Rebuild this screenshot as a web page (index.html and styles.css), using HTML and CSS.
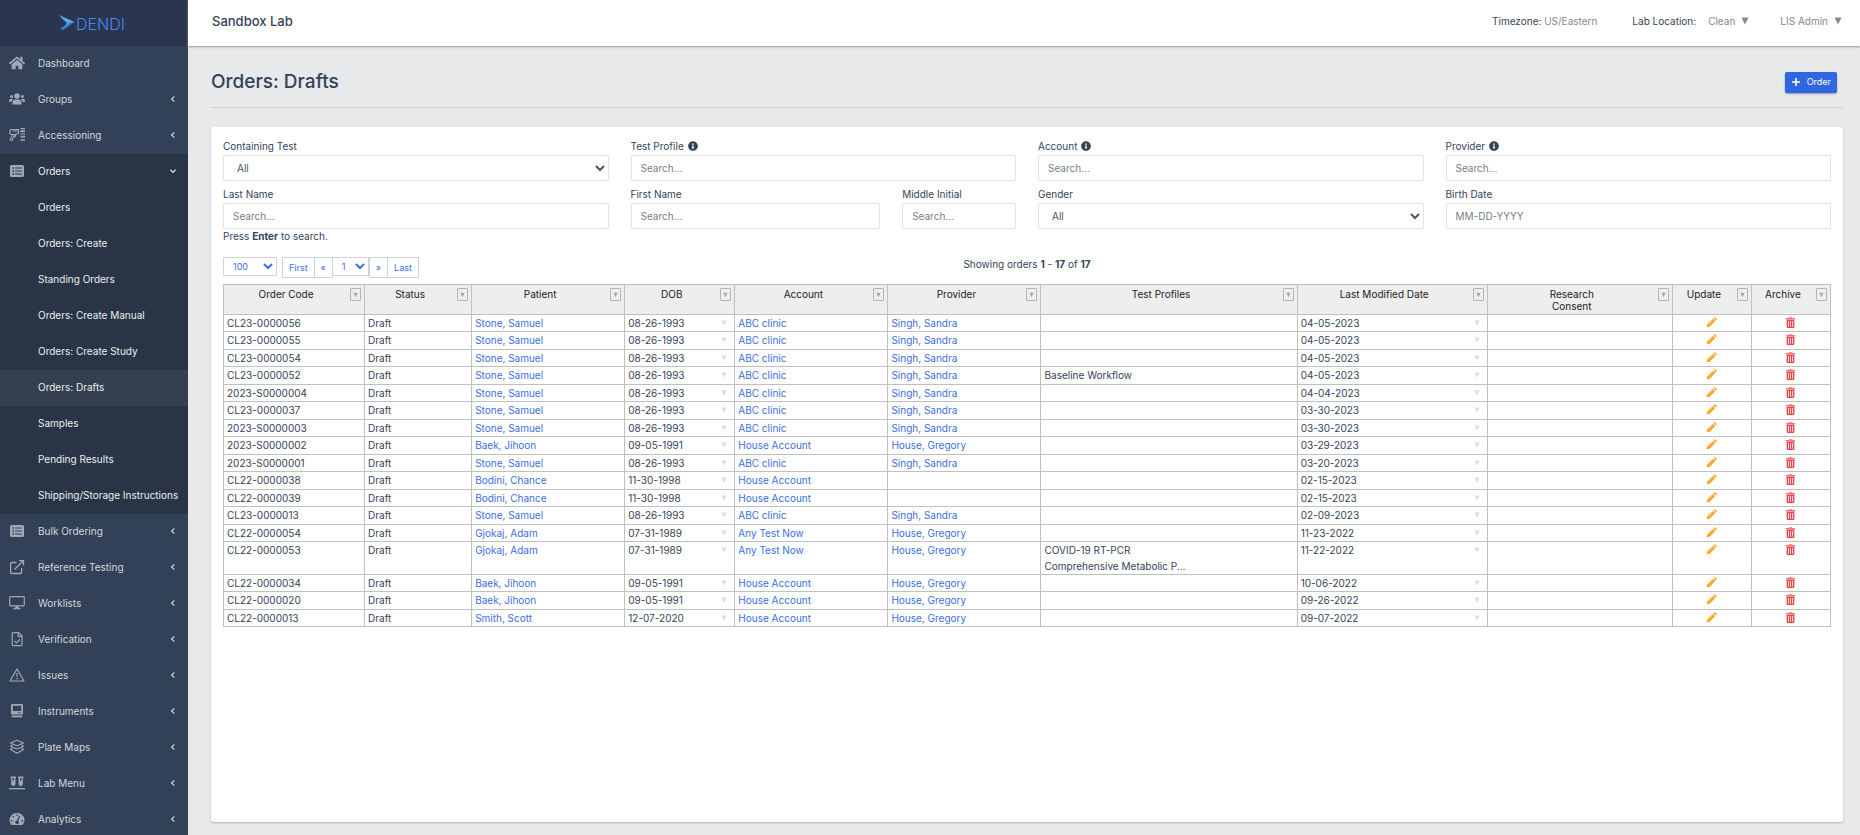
FILE: index.html
```html
<!DOCTYPE html>
<html lang="en">
<head>
  <meta charset="UTF-8">
  <title>Orders: Drafts</title>
  <link rel="stylesheet" href="styles.css">
</head>
<body>
  <svg class="sprite" aria-hidden="true">
    <symbol id="i-home" viewBox="0 0 576 512"><path d="M280.37 148.26L96 300.11V464a16 16 0 0 0 16 16l112.06-.29a16 16 0 0 0 15.92-16V368a16 16 0 0 1 16-16h64a16 16 0 0 1 16 16v95.64a16 16 0 0 0 16 16.05L464 480a16 16 0 0 0 16-16V300L295.67 148.26a12.19 12.19 0 0 0-15.3 0zM571.6 251.47L488 182.56V44.05a12 12 0 0 0-12-12h-56a12 12 0 0 0-12 12v72.61L318.47 43a48 48 0 0 0-61 0L4.34 251.47a12 12 0 0 0-1.6 16.9l25.5 31A12 12 0 0 0 45.15 301l235.22-193.74a12.19 12.19 0 0 1 15.3 0L530.9 301a12 12 0 0 0 16.9-1.6l25.5-31a12 12 0 0 0-1.7-16.93z"/></symbol>
    <symbol id="i-users" viewBox="0 0 16 16"><circle cx="8" cy="5" r="2.8"/><circle cx="2.5" cy="5.6" r="1.5"/><circle cx="13.5" cy="5.6" r="1.5"/><path d="M3.4 13.5v-1.6c0-2 1.5-3.3 3.1-3.3h3c1.6 0 3.1 1.3 3.1 3.3v1.6zM0 10.700V9.600C0 8.600.8 7.900 1.700 7.900h1.700c.5 0 .8.1 1.100.4-1.100.6-1.700 1.500-1.900 2.400zM16 10.700V9.600c0-1-.8-1.700-1.700-1.700h-1.700c-.5 0-.8.1-1.100.4 1.100.6 1.700 1.500 1.900 2.400z"/></symbol>
    <symbol id="i-scan" viewBox="0 0 16 16"><path d="M1.500 2.500h8v4l-4 1h-3.500l-1.500-1.500zM3.500 7.500l-2.500 5 2 1 2.600-6M7 7.300l-1 2.700h-1.200M9.500 4h-6" fill="none" stroke="currentColor" stroke-width="1.100"/><path d="M11.500 1h4.500v1.300h-4.500zM11.500 3.300h4.500v2h-4.500zM11.500 6.500h4.500v1h-4.500zM11.500 8.700h4.500v1.800h-4.500zM11.500 12.300h4.500v1.500h-4.500z"/></symbol>
    <symbol id="i-list" viewBox="0 0 16 16"><path fill-rule="evenodd" d="M2.500 2h11A1.500 1.500 0 0 1 15 3.500v9a1.500 1.500 0 0 1-1.500 1.500h-11A1.500 1.500 0 0 1 1 12.500v-9A1.500 1.500 0 0 1 2.500 2zM3.500 4.200v1.600h1.600V4.200zM6.200 4.500v1h6.600v-1zM3.500 7.200v1.600h1.600V7.200zM6.200 7.500v1h6.600v-1zM3.500 10.200v1.600h1.600v-1.600zM6.200 10.500v1h6.600v-1z"/></symbol>
    <symbol id="i-external" viewBox="0 0 16 16"><path d="M7.500 3.500H2.600a1 1 0 0 0-1 1v9a1 1 0 0 0 1 1h9a1 1 0 0 0 1-1V9M5.500 10.500l8.500-8.500M10 1.600h4.500v4.600" fill="none" stroke="currentColor" stroke-width="1.300"/></symbol>
    <symbol id="i-desktop" viewBox="0 0 16 16"><path d="M1.500 1.700h13a.8.8 0 0 1 .8.8v7.500a.8.8 0 0 1-.8.8h-13a.8.8 0 0 1-.8-.8V2.500a.8.8 0 0 1 .8-.8z" fill="none" stroke="currentColor" stroke-width="1.200"/><path d="M6.700 11h2.600l.5 2h1.700v1.200h-7V13h1.700z"/></symbol>
    <symbol id="i-file" viewBox="0 0 16 16"><path d="M4 1.600h5.500l3.500 3.500v8.700a.8.8 0 0 1-.8.8H4a.8.8 0 0 1-.8-.8V2.400a.8.8 0 0 1 .8-.8zM9.300 1.800v3.500h3.500M5.500 9.800l2 2 3.500-3.500" fill="none" stroke="currentColor" stroke-width="1.200"/></symbol>
    <symbol id="i-warning" viewBox="0 0 16 16"><path d="M8 2L15 14H1z" fill="none" stroke="currentColor" stroke-width="1.200" stroke-linejoin="round"/><path d="M7.300 6h1.400l-.2 4h-1zM7.300 11h1.400v1.300H7.300z"/></symbol>
    <symbol id="i-instrument" viewBox="0 0 16 16"><path fill-rule="evenodd" d="M3 1h10a1 1 0 0 1 1 1v9.500H2V2a1 1 0 0 1 1-1zM3.800 2.700v5.300h8.400V2.700zM8.500 9.400v.8h3.500v-.8z"/><path d="M2.800 12.500h10.400v1.800H2.800z"/></symbol>
    <symbol id="i-layers" viewBox="0 0 16 16"><path d="M8 1.300l6.500 2.700L8 6.700 1.500 4zM3.700 6L1.500 7.200 8 10l6.500-2.800L12.300 6M3.700 9.200l-2.200 1.200L8 14.200l6.500-3.800-2.200-1.200" fill="none" stroke="currentColor" stroke-width="1.200" stroke-linejoin="round"/></symbol>
    <symbol id="i-vials" viewBox="0 0 16 16"><path fill-rule="evenodd" d="M1.500 1.500h5.500v1.500h-.6v6a2 2 0 0 1-4.200 0V3h-.7zM3.500 3v2.500H5V3zM9 1.500h5.500v1.500h-.7v6a2 2 0 0 1-4.200 0V3H9zM11 3v2.500h1.500V3z"/><path d="M0 13h16v1.300H0z"/></symbol>
    <symbol id="i-gauge" viewBox="0 0 16 16"><path fill-rule="evenodd" d="M8 2a7.200 7.200 0 0 1 6 11.500.9.9 0 0 1-.7.400H2.700a.9.900 0 0 1-.7-.4A7.200 7.200 0 0 1 8 2zM7.300 3.200v1.500h1.400V3.200zM3.600 4.900v1.400h1.400V4.900zM2 9v1.400h1.400V9zM12.600 9v1.400H14V9zM10.200 4.400L8 9.400a1.800 1.800 0 1 0 1.300.5l2-5z"/></symbol>
    <symbol id="i-left" viewBox="0 0 8 8"><path d="M5.300 1.300L2.600 4l2.700 2.700" fill="none" stroke="currentColor" stroke-width="1.200"/></symbol>
    <symbol id="i-down" viewBox="0 0 8 8"><path d="M1.300 2.700L4 5.400l2.700-2.700" fill="none" stroke="currentColor" stroke-width="1.200"/></symbol>
    <symbol id="i-info" viewBox="0 0 512 512"><path d="M256 8C119.043 8 8 119.083 8 256c0 136.997 111.043 248 248 248s248-111.003 248-248C504 119.083 392.957 8 256 8zm0 110c23.196 0 42 18.804 42 42s-18.804 42-42 42-42-18.804-42-42 18.804-42 42-42zm56 254c0 6.627-5.373 12-12 12h-88c-6.627 0-12-5.373-12-12v-24c0-6.627 5.373-12 12-12h12v-64h-12c-6.627 0-12-5.373-12-12v-24c0-6.627 5.373-12 12-12h64c6.627 0 12 5.373 12 12v100h12c6.627 0 12 5.373 12 12v24z"/></symbol>
    <symbol id="i-plus" viewBox="0 0 10 10"><path d="M4.200 1h1.600v3.200H9v1.600H5.800V9H4.200V5.800H1V4.200h3.200z"/></symbol>
    <symbol id="i-caret" viewBox="0 0 8 8"><path d="M.5 .5h7L4 7.500z"/></symbol>
    <symbol id="i-pencil" viewBox="0 0 12 12"><path d="M.7 11.300l.8-3.300L7.700 1.800l2.500 2.500L4 10.500z"/><path d="M8.300 1.200l.7-.7a.9.9 0 0 1 1.200 0l1.300 1.300a.9.9 0 0 1 0 1.200l-.7.7z"/><path d="M3 8.300L7.800 3.500" stroke="#fff" stroke-opacity=".6" stroke-width=".6"/></symbol>
    <symbol id="i-trash" viewBox="0 0 10 12"><path opacity=".75" d="M3.500.3h3l.6.9H10v1.500H0V1.200h2.900z"/><path fill-rule="evenodd" d="M.8 3h8.400v8a.9.9 0 0 1-.9.900H1.700a.9.9 0 0 1-.9-.9zM2.300 4.300v6.200h.9V4.300zM4.600 4.300v6.200h.9V4.300zM6.900 4.300v6.200h.9V4.300z"/></symbol>
  </svg>

  <div class="layout">
    <aside class="sidebar">
      <a href="#" class="brand">
        <svg class="brand-mark" viewBox="0 0 16 16">
          <path d="M0 0l15.500 7L10 8.500 4 4.500z" fill="#5aa9f5"/>
          <path d="M15.500 7L3 15.500 2 11l1.500 1.500L10 7.500z" fill="#3f7fe0"/>
          <path d="M4 4.500l6 3.500-4 3 2-3z" fill="#35d0d8"/>
        </svg>
        <span class="brand-name">DENDI</span>
      </a>
      <nav>
        <a href="#" class="nav-item"><svg class="nav-icon"><use href="#i-home"/></svg>Dashboard</a>
        <a href="#" class="nav-item"><svg class="nav-icon"><use href="#i-users"/></svg>Groups<svg class="chevron"><use href="#i-left"/></svg></a>
        <a href="#" class="nav-item"><svg class="nav-icon"><use href="#i-scan"/></svg>Accessioning<svg class="chevron"><use href="#i-left"/></svg></a>
        <div class="nav-open">
          <a href="#" class="nav-item"><svg class="nav-icon"><use href="#i-list"/></svg>Orders<svg class="chevron"><use href="#i-down"/></svg></a>
          <a href="#" class="nav-sub">Orders</a>
          <a href="#" class="nav-sub">Orders: Create</a>
          <a href="#" class="nav-sub">Standing Orders</a>
          <a href="#" class="nav-sub">Orders: Create Manual</a>
          <a href="#" class="nav-sub">Orders: Create Study</a>
          <a href="#" class="nav-sub active">Orders: Drafts</a>
          <a href="#" class="nav-sub">Samples</a>
          <a href="#" class="nav-sub">Pending Results</a>
          <a href="#" class="nav-sub">Shipping/Storage Instructions</a>
        </div>
        <a href="#" class="nav-item"><svg class="nav-icon"><use href="#i-list"/></svg>Bulk Ordering<svg class="chevron"><use href="#i-left"/></svg></a>
        <a href="#" class="nav-item"><svg class="nav-icon"><use href="#i-external"/></svg>Reference Testing<svg class="chevron"><use href="#i-left"/></svg></a>
        <a href="#" class="nav-item"><svg class="nav-icon"><use href="#i-desktop"/></svg>Worklists<svg class="chevron"><use href="#i-left"/></svg></a>
        <a href="#" class="nav-item"><svg class="nav-icon"><use href="#i-file"/></svg>Verification<svg class="chevron"><use href="#i-left"/></svg></a>
        <a href="#" class="nav-item"><svg class="nav-icon"><use href="#i-warning"/></svg>Issues<svg class="chevron"><use href="#i-left"/></svg></a>
        <a href="#" class="nav-item"><svg class="nav-icon"><use href="#i-instrument"/></svg>Instruments<svg class="chevron"><use href="#i-left"/></svg></a>
        <a href="#" class="nav-item"><svg class="nav-icon"><use href="#i-layers"/></svg>Plate Maps<svg class="chevron"><use href="#i-left"/></svg></a>
        <a href="#" class="nav-item"><svg class="nav-icon"><use href="#i-vials"/></svg>Lab Menu<svg class="chevron"><use href="#i-left"/></svg></a>
        <a href="#" class="nav-item"><svg class="nav-icon"><use href="#i-gauge"/></svg>Analytics<svg class="chevron"><use href="#i-left"/></svg></a>
      </nav>
    </aside>

    <div class="page">
      <header class="topbar">
        <span class="lab-name">Sandbox Lab</span>
        <div class="topbar-right">
          <span class="timezone">Timezone: <span class="muted">US/Eastern</span></span>
          <div class="location">
            <span>Lab Location:</span>
            <a href="#" class="menu-link">Clean <svg class="menu-caret"><use href="#i-caret"/></svg></a>
          </div>
          <a href="#" class="menu-link">LIS Admin <svg class="menu-caret"><use href="#i-caret"/></svg></a>
        </div>
      </header>

      <main class="content">
        <div class="page-head">
          <h1>Orders: Drafts</h1>
          <button type="button" class="btn-primary"><svg class="plus"><use href="#i-plus"/></svg>Order</button>
        </div>

        <section class="card">
          <form class="filters">
            <div class="field span-3">
              <label for="test">Containing Test</label>
              <select id="test"><option>All</option></select>
            </div>
            <div class="field span-3">
              <label for="profile">Test Profile <svg class="info"><use href="#i-info"/></svg></label>
              <input id="profile" type="text" placeholder="Search...">
            </div>
            <div class="field span-3">
              <label for="account">Account <svg class="info"><use href="#i-info"/></svg></label>
              <input id="account" type="text" placeholder="Search...">
            </div>
            <div class="field span-3">
              <label for="provider">Provider <svg class="info"><use href="#i-info"/></svg></label>
              <input id="provider" type="text" placeholder="Search...">
            </div>
            <div class="field span-3">
              <label for="last">Last Name</label>
              <input id="last" type="text" placeholder="Search...">
            </div>
            <div class="field span-2">
              <label for="first">First Name</label>
              <input id="first" type="text" placeholder="Search...">
            </div>
            <div class="field span-1">
              <label for="middle">Middle Initial</label>
              <input id="middle" type="text" placeholder="Search...">
            </div>
            <div class="field span-3">
              <label for="gender">Gender</label>
              <select id="gender"><option>All</option></select>
            </div>
            <div class="field span-3">
              <label for="birth">Birth Date</label>
              <input id="birth" type="text" placeholder="MM-DD-YYYY">
            </div>
          </form>
          <p class="hint">Press <strong>Enter</strong> to search.</p>

          <div class="toolbar">
            <div class="pager">
              <select class="page-size" aria-label="Rows per page"><option>100</option></select>
              <div class="pages">
                <button type="button">First</button>
                <button type="button">«</button>
                <select aria-label="Page"><option>1</option></select>
                <button type="button">»</button>
                <button type="button">Last</button>
              </div>
            </div>
            <p class="summary">Showing orders <strong>1</strong> - <strong>17</strong> of <strong>17</strong></p>
          </div>

          <table class="orders">
            <colgroup>
              <col class="c-code"><col class="c-status"><col class="c-name"><col class="c-dob"><col class="c-name"><col class="c-name">
              <col class="c-profiles"><col class="c-modified"><col class="c-consent"><col class="c-action"><col class="c-action">
            </colgroup>
            <thead>
              <tr id="head"></tr>
            </thead>
            <tbody id="rows"></tbody>
          </table>
        </section>
      </main>
    </div>
  </div>

  <script src="script.js"></script>
</body>
</html>
```
FILE: styles.css
```css
:root {
  --sidebar: #324158;
  --sidebar-top: #29364d;
  --sidebar-open: #293546;
  --sidebar-active: #343f4f;
  --bg: #e7e9eb;
  --text: #34435a;
  --muted: #85868f;
  --link: #3b6fe0;
  --primary: #3067e0;
  --border: #dfe2e6;
  --grid: #c0c0c0;
}
* {
  box-sizing: border-box;
}
body {
  margin: 0;
  font-family: Inter, "Liberation Sans", sans-serif;
  font-size: 10px;
  line-height: 16px;
  color: var(--text);
  background: var(--bg);
}
a {
  text-decoration: none;
  color: var(--link);
}
svg {
  fill: currentColor;
}
.sprite {
  display: none;
}
.layout {
  display: flex;
  height: 100vh;
}

/* Sidebar */
.sidebar {
  flex: 0 0 188px;
  background: var(--sidebar);
  overflow: hidden;
}
.brand {
  display: flex;
  align-items: center;
  justify-content: center;
  gap: 1px;
  height: 46px;
  padding-right: 4px;
  background: var(--sidebar-top);
  color: #4f86ee;
}
.brand-mark {
  width: 16px;
  height: 16px;
}
.brand-name {
  padding-top: 2px;
  font-size: 16px;
  font-weight: 300;
}
.nav-item,
.nav-sub {
  display: flex;
  align-items: center;
  height: 36px;
  padding: 0 11px 2px 9px;
  color: #d3d7dc;
}
.nav-sub {
  padding-left: 38px;
  padding-right: 0;
  color: #eceef0;
  white-space: nowrap;
}
.nav-icon {
  width: 16px;
  height: 16px;
  margin-right: 13px;
  color: #a0a8b3;
}
.chevron {
  width: 8px;
  height: 8px;
  margin-left: auto;
}
.nav-open {
  background: var(--sidebar-open);
}
.nav-open .nav-item {
  color: #eceef0;
}
.nav-sub.active {
  background: var(--sidebar-active);
}

/* Top bar */
.page {
  flex: 1;
  min-width: 0;
  display: flex;
  flex-direction: column;
}
.topbar {
  display: flex;
  align-items: center;
  justify-content: space-between;
  height: 46px;
  padding: 0 18px 4px 24px;
  background: #fff;
  box-shadow: 0 1px 2px #8e97ab;
}
.lab-name {
  font-size: 13px;
  font-weight: 500;
}
.topbar-right {
  display: flex;
  gap: 31px;
}
.timezone {
  padding-right: 4px;
}
.location {
  display: flex;
  gap: 12px;
}
.muted,
.menu-link {
  color: var(--muted);
}
.menu-link {
  display: flex;
  align-items: center;
  gap: 6px;
}
.menu-caret {
  width: 8px;
  height: 8px;
}

/* Content */
.content {
  flex: 1;
  min-height: 0;
  display: flex;
  flex-direction: column;
  padding: 14px 17px 13px 23px;
}
.page-head {
  display: flex;
  align-items: center;
  justify-content: space-between;
  height: 48px;
  padding: 0 6px 3px 0;
  border-bottom: 1px solid #cfd2d6;
  margin-bottom: 19px;
}
h1 {
  margin: 0;
  font-size: 19px;
  font-weight: 500;
}
.btn-primary {
  display: flex;
  align-items: center;
  gap: 6px;
  height: 21px;
  padding: 0 6px;
  border: 0;
  border-radius: 2px;
  background: var(--primary);
  box-shadow: 0 1px 2px #8e97ab;
  color: #fff;
  font: inherit;
  font-size: 9px;
}
.plus {
  width: 10px;
  height: 10px;
}
.card {
  flex: 1;
  padding: 11px 12px;
  background: #fff;
  border-radius: 3px;
  box-shadow: 0 1px 2px #a9b1c0;
}

/* Filters */
.filters {
  display: grid;
  grid-template-columns: repeat(12, 1fr);
  column-gap: 22px;
  row-gap: 5px;
}
.span-1 { grid-column: span 1; }
.span-2 { grid-column: span 2; }
.span-3 { grid-column: span 3; }
.field {
  display: flex;
  flex-direction: column;
  min-width: 0;
}
.field label {
  display: flex;
  align-items: center;
  gap: 4px;
  height: 17px;
  padding-bottom: 2px;
  white-space: nowrap;
}
.info {
  width: 10px;
  height: 10px;
}
.field input,
.field select {
  width: 100%;
  height: 26px;
  padding: 0 9px;
  border: 1px solid var(--border);
  border-radius: 2px;
  background: #fff;
  font: inherit;
  color: #4b5563;
}
.field select {
  padding-right: 0;
}
.field input::placeholder {
  color: #75808c;
}
.hint {
  margin: 0;
  line-height: 14px;
}

/* Pager */
.toolbar {
  display: grid;
  grid-template-columns: 1fr auto 1fr;
  height: 27px;
  margin-top: 14px;
}
.pager,
.pages {
  display: flex;
  align-items: flex-start;
}
.pager {
  gap: 5px;
}
.pager select,
.pager button {
  height: 21px;
  border: 1px solid #cfd4dc;
  background: #fff;
  color: var(--link);
  font: inherit;
  font-size: 9px;
}
.pager button {
  padding: 0 6px;
  margin-right: -1px;
}
.pager select {
  height: 19px;
  width: 37px;
  padding: 0 0 0 5px;
}
.pager .page-size {
  width: 54px;
}
.summary {
  margin: 0;
  line-height: 14px;
}

/* Orders table */
.orders {
  width: 100%;
  table-layout: fixed;
  border-collapse: collapse;
}
.c-code { width: 141px; }
.c-status { width: 107px; }
.c-name { width: 153px; }
.c-dob { width: 110px; }
.c-profiles { width: 256px; }
.c-modified { width: 190px; }
.c-consent { width: 185px; }
.c-action { width: 79px; }
.orders th,
.orders td {
  padding: 0 3px;
  border: 1px solid var(--grid);
  vertical-align: top;
}
.orders th {
  height: 30px;
  background: #eee;
  color: #222;
  font-weight: 400;
  line-height: 12px;
}
.th-inner {
  display: flex;
  align-items: flex-start;
  justify-content: space-between;
  gap: 5px;
  padding-top: 3px;
}
.th-inner span {
  flex: 1;
}
.filter-btn {
  display: flex;
  align-items: center;
  justify-content: center;
  width: 11px;
  height: 13px;
  padding: 0;
  border: 1px solid #b5b5b5;
  border-radius: 1px;
  background: #eee;
  color: #aaa;
}
.filter-btn svg {
  width: 5px;
  height: 6px;
}
/* alternate 17/18 so pairs of rows come to 35 */
.orders tbody tr {
  height: 17px;
}
.orders tbody tr:nth-child(even) {
  height: 18px;
}
.date-cell {
  display: flex;
  align-items: center;
  justify-content: space-between;
  padding-right: 4px;
}
.date-cell svg {
  width: 6px;
  height: 6px;
  color: #ddd;
}
.orders .icon-cell {
  text-align: center;
}
.icon-cell a {
  display: flex;
  justify-content: center;
  align-items: center;
  height: 14px;
}
.icon-cell svg {
  width: 11px;
  height: 11px;
}
.edit {
  color: #fba325;
}
.remove {
  color: #ec414b;
}
```
FILE: script.js
```js
const columns = ['Order Code', 'Status', 'Patient', 'DOB', 'Account', 'Provider',
  'Test Profiles', 'Last Modified Date', 'Research<br>Consent', 'Update', 'Archive'];

// code, patient, dob, account, provider, test profiles, last modified
const orders = [
  ['CL23-0000056', 'Stone, Samuel', '08-26-1993', 'ABC clinic', 'Singh, Sandra', '', '04-05-2023'],
  ['CL23-0000055', 'Stone, Samuel', '08-26-1993', 'ABC clinic', 'Singh, Sandra', '', '04-05-2023'],
  ['CL23-0000054', 'Stone, Samuel', '08-26-1993', 'ABC clinic', 'Singh, Sandra', '', '04-05-2023'],
  ['CL23-0000052', 'Stone, Samuel', '08-26-1993', 'ABC clinic', 'Singh, Sandra', 'Baseline Workflow', '04-05-2023'],
  ['2023-S0000004', 'Stone, Samuel', '08-26-1993', 'ABC clinic', 'Singh, Sandra', '', '04-04-2023'],
  ['CL23-0000037', 'Stone, Samuel', '08-26-1993', 'ABC clinic', 'Singh, Sandra', '', '03-30-2023'],
  ['2023-S0000003', 'Stone, Samuel', '08-26-1993', 'ABC clinic', 'Singh, Sandra', '', '03-30-2023'],
  ['2023-S0000002', 'Baek, Jihoon', '09-05-1991', 'House Account', 'House, Gregory', '', '03-29-2023'],
  ['2023-S0000001', 'Stone, Samuel', '08-26-1993', 'ABC clinic', 'Singh, Sandra', '', '03-20-2023'],
  ['CL22-0000038', 'Bodini, Chance', '11-30-1998', 'House Account', '', '', '02-15-2023'],
  ['CL22-0000039', 'Bodini, Chance', '11-30-1998', 'House Account', '', '', '02-15-2023'],
  ['CL23-0000013', 'Stone, Samuel', '08-26-1993', 'ABC clinic', 'Singh, Sandra', '', '02-09-2023'],
  ['CL22-0000054', 'Gjokaj, Adam', '07-31-1989', 'Any Test Now', 'House, Gregory', '', '11-23-2022'],
  ['CL22-0000053', 'Gjokaj, Adam', '07-31-1989', 'Any Test Now', 'House, Gregory', 'COVID-19 RT-PCR<br>Comprehensive Metabolic P...', '11-22-2022'],
  ['CL22-0000034', 'Baek, Jihoon', '09-05-1991', 'House Account', 'House, Gregory', '', '10-06-2022'],
  ['CL22-0000020', 'Baek, Jihoon', '09-05-1991', 'House Account', 'House, Gregory', '', '09-26-2022'],
  ['CL22-0000013', 'Smith, Scott', '12-07-2020', 'House Account', 'House, Gregory', '', '09-07-2022']
];

const link = text => text ? `<a href="#">${text}</a>` : '';
const date = text => `<div class="date-cell">${text}<svg><use href="#i-caret"/></svg></div>`;

document.getElementById('head').innerHTML = columns.map(name => `
  <th><div class="th-inner">
    <span>${name}</span>
    <button type="button" class="filter-btn" aria-label="Filter"><svg><use href="#i-caret"/></svg></button>
  </div></th>`).join('');

document.getElementById('rows').innerHTML = orders.map(([code, patient, dob, account, provider, profiles, modified]) => `
  <tr>
    <td>${code}</td>
    <td>Draft</td>
    <td>${link(patient)}</td>
    <td>${date(dob)}</td>
    <td>${link(account)}</td>
    <td>${link(provider)}</td>
    <td>${profiles}</td>
    <td>${date(modified)}</td>
    <td></td>
    <td class="icon-cell"><a href="#" class="edit" aria-label="Update"><svg><use href="#i-pencil"/></svg></a></td>
    <td class="icon-cell"><a href="#" class="remove" aria-label="Archive"><svg><use href="#i-trash"/></svg></a></td>
  </tr>`).join('');
```
